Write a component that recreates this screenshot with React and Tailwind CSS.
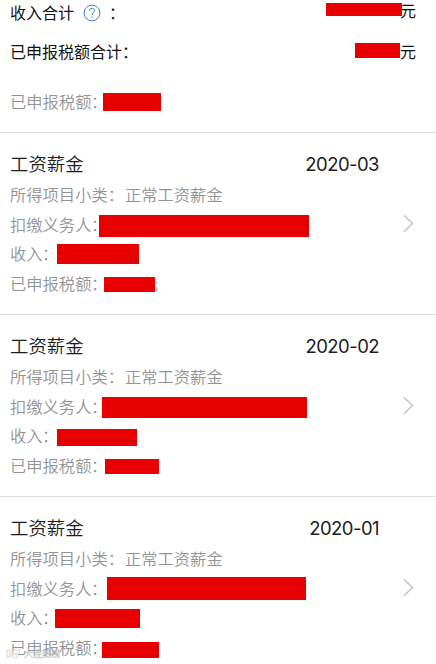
import React from "react";

const records = [
  {
    month: "2020-03",
    agent: { label: "w-[89px]", bar: "mt-[5.5px] h-[22px] w-[210px]" },
    income: { label: "w-[47px]", bar: "mt-[5px] h-[20px] w-[82px]" },
    tax: { label: "w-[93.5px]", bar: "mt-[8.5px] h-[15px] w-[51.5px]", unit: true },
  },
  {
    month: "2020-02",
    agent: { label: "w-[92px]", bar: "mt-[5.5px] h-[21px] w-[205px]" },
    income: { label: "w-[47px]", bar: "mt-[8px] h-[17px] w-[79.5px]" },
    tax: { label: "w-[95px]", bar: "mt-[8.5px] h-[15px] w-[54px]" },
  },
  {
    month: "2020-01",
    agent: { label: "w-[97px]", bar: "mt-[3px] h-[23.5px] w-[199px]" },
    income: { label: "w-[45px]", bar: "mt-[5.5px] h-[19.5px] w-[85px]" },
    tax: { label: "w-[91.5px]", bar: "mt-[9.5px] h-[15.5px] w-[57.5px]" },
  },
];

const HiddenRow = ({ text, size }) => (
  <div className="flex h-[29.5px] items-start">
    <span className={`shrink-0 whitespace-nowrap leading-[29.5px] ${size.label}`}>
      {text}<span className="-ml-[0.5px]">：</span>
    </span>
    <span className={`z-10 shrink-0 bg-[#e80000] ${size.bar}`}></span>
    {size.unit && <span className="-ml-[13.5px] leading-[29.5px]">元</span>}
  </div>
);

const RecordItem = ({ item }) => (
  <div className="flex h-[182px] items-center border-b border-[#dedede] pl-[10px] pr-[22px]">
    <div className="flex-1">
      <div className="flex h-[31px] items-center justify-between pr-[24px] text-[#1c1c1c]">
        <span className="-mt-[2px] text-[18.4px] font-[350]">工资薪金</span>
        <span className="mt-px font-[Inter,sans-serif] text-[18.5px] font-normal tracking-[-0.55px]">{item.month}</span>
      </div>
      <div className="text-[16.3px] font-[350] text-[#939496]">
        <div className="h-[29.5px] leading-[29.5px]">
          所得项目小类：<span className="ml-px">正常工资薪金</span>
        </div>
        <HiddenRow text="扣缴义务人" size={item.agent} />
        <HiddenRow text="收入" size={item.income} />
        <HiddenRow text="已申报税额" size={item.tax} />
      </div>
    </div>
    <svg className="h-[18px] w-[11px] shrink-0" viewBox="0 0 11 18" fill="none" stroke="#c3c3c5" strokeWidth="1.5">
      <path d="M1 0.3L9.5 8.5L1 16.7" />
    </svg>
  </div>
);

const App = () => {
  return (
    <div className="relative h-[664px] w-[436px] overflow-hidden bg-white font-['Noto_Sans_CJK_SC',sans-serif]">
      {/* Totals */}
      <div className="h-[133px] border-b border-[#dedede] pl-[10px] pr-[20px]">
        <div className="flex h-[26px] items-start justify-between text-[16px] text-[#111]">
          <div className="flex h-[25px] items-center">
            <span className="-mt-px">收入合计</span>
            <svg className="ml-[8.5px] h-[18px] w-[18px]" viewBox="0 0 18 18" fill="none" stroke="#3f7fd6" strokeWidth="1">
              <circle cx="9" cy="9" r="7.9" />
              <path d="M6.4 6.9C6.4 5.3 7.5 4.3 9 4.3C10.5 4.3 11.6 5.3 11.6 6.7C11.6 8.5 9.1 8.8 9.1 11" />
              <path d="M9.1 12.4V13.7" />
            </svg>
            <span className="-mt-px ml-[8.5px]">：</span>
          </div>
          <div className="flex items-start">
            <span className="z-10 mt-[3px] h-[13px] w-[76px] bg-[#e80000]"></span>
            <span className="-ml-[2.5px] leading-[20px]">元</span>
          </div>
        </div>
        <div className="flex h-[52px] items-start justify-between text-[16px] text-[#111]">
          <span className="leading-[50px]">已申报税额合计：</span>
          <div className="flex items-start">
            <span className="mt-[17px] h-[15px] w-[45px] bg-[#e80000]"></span>
            <span className="leading-[51px]">元</span>
          </div>
        </div>
        <div className="flex h-[48px] items-start text-[16.3px] font-[350] text-[#939496]">
          <span className="w-[93px] shrink-0 whitespace-nowrap leading-[46px]">
            已申报税额<span className="-ml-[0.5px]">：</span>
          </span>
          <span className="mt-[15px] h-[18px] w-[57.5px] bg-[#e80000]"></span>
        </div>
      </div>

      {/* Monthly records */}
      {records.map((item) => (
        <RecordItem key={item.month} item={item} />
      ))}

      {/* Watermark */}
      <div className="absolute left-[6px] top-[648px] z-20 flex h-[11px] items-center gap-[3px] opacity-70">
        <svg className="h-[10px] w-[15px]" viewBox="0 0 15 10" fill="#fff" stroke="#b5b5b5" strokeWidth="0.8">
          <path d="M1 1H4V8H1ZM6 1H14L13 5L10 9L6 7Z" />
          <path d="M8 3L10 5L12 3" />
        </svg>
        <span className="text-[9px] leading-[11px] text-white [-webkit-text-stroke:0.5px_#b0b0b0]">大连热线</span>
      </div>
    </div>
  );
};

export default App;
